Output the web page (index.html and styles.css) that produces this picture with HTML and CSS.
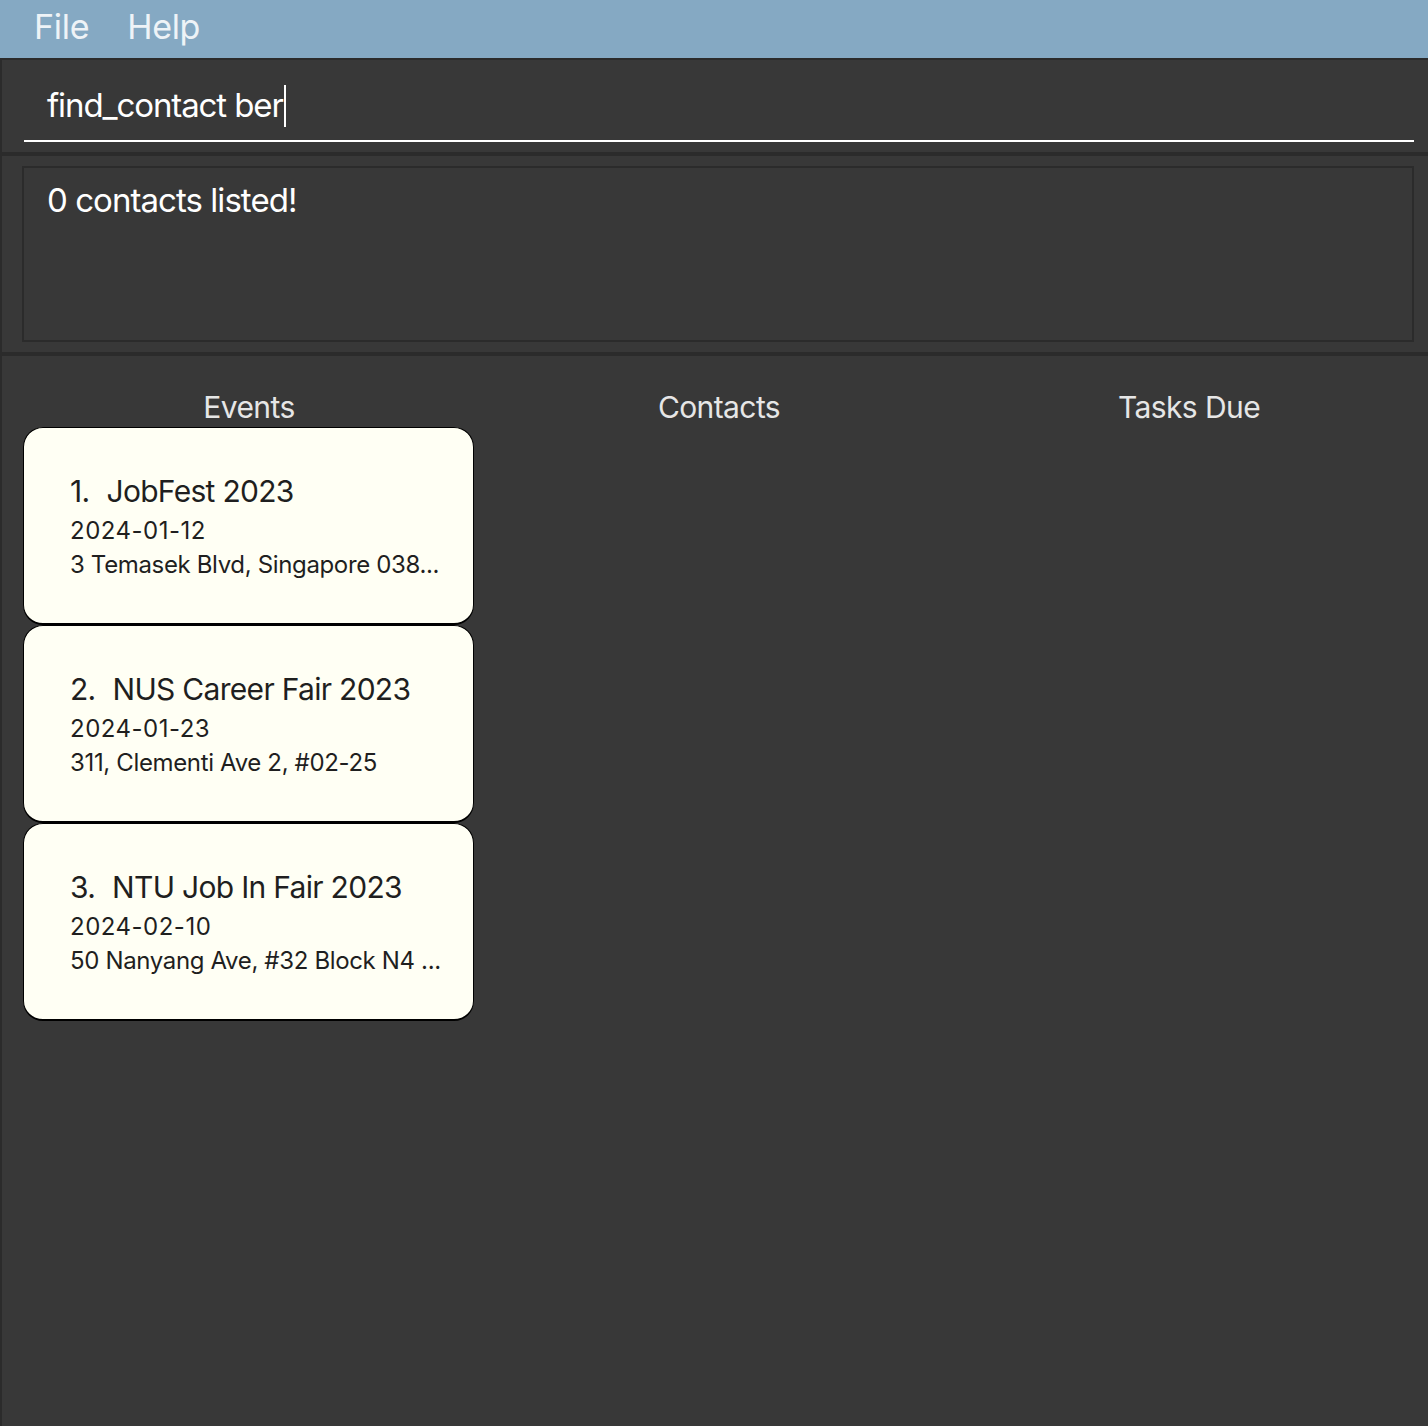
FILE: index.html
```html
<!DOCTYPE html>
<html lang="en">
<head>
<meta charset="utf-8">
<title>App</title>
<link rel="stylesheet" href="styles.css">
</head>
<body>
<div class="app">
  <nav class="menubar">
    <span class="menu-item">File</span>
    <span class="menu-item">Help</span>
  </nav>
  <div class="body">
    <section class="command">
      <div class="command-field"><span class="command-text">find_contact ber</span><span class="caret"></span></div>
    </section>
    <div class="divider"></div>
    <section class="result">
      <div class="result-box">0 contacts listed!</div>
    </section>
    <div class="divider"></div>
    <main class="lists">
      <div class="column">
        <h2 class="col-title">Events</h2>
        <div class="card">
          <div class="card-title"><span class="card-id">1.</span><span>JobFest 2023</span></div>
          <div class="card-line date">2024-01-12</div>
          <div class="card-line">3 Temasek Blvd, Singapore 038...</div>
        </div>
        <div class="card">
          <div class="card-title"><span class="card-id">2.</span><span>NUS Career Fair 2023</span></div>
          <div class="card-line date">2024-01-23</div>
          <div class="card-line">311, Clementi Ave 2, #02-25</div>
        </div>
        <div class="card">
          <div class="card-title"><span class="card-id">3.</span><span>NTU Job In Fair 2023</span></div>
          <div class="card-line date">2024-02-10</div>
          <div class="card-line">50 Nanyang Ave, #32 Block N4 ...</div>
        </div>
      </div>
      <div class="column">
        <h2 class="col-title">Contacts</h2>
      </div>
      <div class="column">
        <h2 class="col-title">Tasks Due</h2>
      </div>
    </main>
  </div>
</div>
</body>
</html>
```
FILE: styles.css
```css
* { box-sizing: border-box; }
html, body {
  margin: 0;
  padding: 0;
  height: 100%;
}
body {
  font-family: Inter, "Noto Sans", sans-serif;
  background: #383838;
}
.app {
  display: flex;
  flex-direction: column;
  min-height: 1426px;
}
.menubar {
  height: 60px;
  background: #85a9c3;
  border-bottom: 2px solid #2b2b2b;
  display: flex;
  align-items: flex-start;
  padding-left: 15px;
}
.menu-item {
  font-size: 34px;
  line-height: 41px;
  padding: 6px 19px 0;
  color: #eef3f7;
  letter-spacing: -0.3px;
}
.body {
  flex: 1;
  display: flex;
  flex-direction: column;
  border-left: 2px solid #2b2b2b;
  background: #383838;
}
.command {
  padding: 25px 14px 10px 22px;
}
.command-field {
  border-bottom: 2px solid #ffffff;
  padding: 0 0 14px 23px;
  display: flex;
  align-items: center;
  height: 57px;
}
.command-text {
  font-size: 33px;
  line-height: 41px;
  color: #ffffff;
  letter-spacing: -1.1px;
}
.caret {
  display: inline-block;
  width: 2px;
  height: 42px;
  background: #ffffff;
  margin-left: 1px;
}
.divider {
  height: 4px;
  background: #2b2b2b;
}
.result {
  padding: 10px 14px 10px 20px;
}
.result-box {
  height: 176px;
  border: 2px solid #2b2b2b;
  padding: 12px 23px;
  font-size: 33px;
  line-height: 41px;
  color: #ffffff;
  letter-spacing: -0.95px;
}
.lists {
  flex: 1;
  display: grid;
  grid-template-columns: 470px 470px 470px;
  padding: 33px 0 0 12px;
  align-items: start;
}
.column {
  display: flex;
  flex-direction: column;
}
.col-title {
  margin: 0 0 2px;
  font-weight: 400;
  font-size: 30px;
  line-height: 36px;
  color: #e6e6e6;
  text-align: center;
  letter-spacing: -0.6px;
}
.card {
  margin-left: 9px;
  width: 451px;
  height: 198px;
  background: #fffff4;
  border: 1.5px solid #000;
  border-bottom-width: 2.5px;
  border-radius: 20px;
  padding: 45px 0 0 46px;
  color: #1f1f1f;
}
.card-title {
  display: flex;
  gap: 17px;
  font-size: 30px;
  line-height: 36px;
  margin-bottom: 5px;
  letter-spacing: -0.7px;
}
.card-line {
  font-size: 24px;
  line-height: 34px;
  letter-spacing: -0.35px;
  white-space: nowrap;
}
.card-line.date {
  letter-spacing: 0.5px;
}
```
